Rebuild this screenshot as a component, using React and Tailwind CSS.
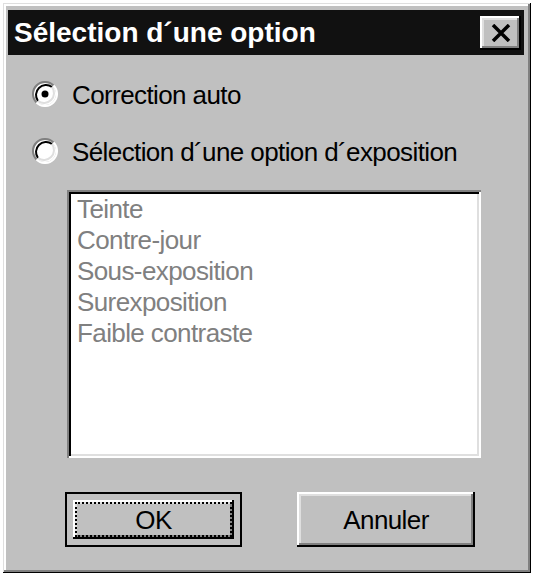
const Radio = ({ checked }) => (
  <svg width="26" height="26" viewBox="0 0 26 26" className="shrink-0">
    <circle cx="13" cy="13" r="11" fill="#fff" />
    {/* outer ring: dark top-left, white bottom-right */}
    <path d="M4.5 21.5 A12 12 0 0 1 21.5 4.5" fill="none" stroke="#808080" strokeWidth="2" />
    <path d="M21.5 4.5 A12 12 0 0 1 4.5 21.5" fill="none" stroke="#fff" strokeWidth="2" />
    {/* inner ring: black top-left, light bottom-right */}
    <path d="M6 20 A10 10 0 0 1 20 6" fill="none" stroke="#000" strokeWidth="2" />
    <path d="M20 6 A10 10 0 0 1 6 20" fill="none" stroke="#dfdfdf" strokeWidth="2" />
    {checked && <circle cx="13" cy="13" r="3.5" fill="#000" />}
  </svg>
);

const items = ["Teinte", "Contre-jour", "Sous-exposition", "Surexposition", "Faible contraste"];

const raised =
  "shadow-[inset_-2px_-2px_#000,inset_2px_2px_#fff,inset_-4px_-4px_#808080,inset_4px_4px_#dfdfdf]";

export default function App() {
  return (
    <div className="w-[535px] h-[579px] bg-white p-[3px] font-['Liberation_Sans',Arial,sans-serif]">
      <div className="w-[528px] h-[570px] bg-[#c0c0c0] flex flex-col pt-[7px] pl-[5px] pr-[7px] shadow-[inset_-1px_-1px_#000,inset_1px_1px_#dfdfdf,inset_-3px_-3px_#808080,inset_3px_3px_#fff]">
        {/* Title bar */}
        <div className="h-[45px] bg-[#111] flex items-center justify-between pl-[6px] pr-[3px]">
          <span className="text-white font-bold text-[28px] leading-none">Sélection d´une option</span>
          <div className={`w-[41px] h-[34px] bg-[#c0c0c0] flex items-center justify-center ${raised}`}>
            <svg width="20" height="18" viewBox="0 0 20 18">
              <path d="M2 1 L18 17 M18 1 L2 17" stroke="#000" strokeWidth="3.5" />
            </svg>
          </div>
        </div>

        {/* Body */}
        <div className="flex flex-col pl-[24px] text-[26px] tracking-[-0.6px] leading-none text-black">
          <label className="mt-[26px] h-[26px] flex items-center gap-[14px]">
            <Radio checked />
            <span className="pt-[2px]">Correction auto</span>
          </label>
          <label className="mt-[31px] h-[26px] flex items-center gap-[14px]">
            <Radio />
            <span className="pt-[2px]">Sélection d´une option d´exposition</span>
          </label>

          <div className="mt-[26px] ml-[35px] w-[414px] h-[268px] bg-white pl-[10px] pt-[4px] shadow-[inset_2px_2px_#808080,inset_-2px_-2px_#fff,inset_4px_4px_#000,inset_-4px_-4px_#dfdfdf]">
            {items.map((item) => (
              <div key={item} className="h-[31px] leading-[31px] text-[#808080]">
                {item}
              </div>
            ))}
          </div>

          <div className="mt-[34px] ml-[33px] flex gap-[55px]">
            <button className="w-[177px] h-[55px] bg-[#c0c0c0] border-2 border-black p-[6px]">
              <div className={`w-full h-full ${raised} p-[2px]`}>
                <div className="w-full h-full border-2 border-dotted border-black flex items-center justify-center">
                  OK
                </div>
              </div>
            </button>
            <button className={`w-[178px] h-[55px] bg-[#c0c0c0] flex items-center justify-center ${raised}`}>
              Annuler
            </button>
          </div>
        </div>
      </div>
    </div>
  );
}
